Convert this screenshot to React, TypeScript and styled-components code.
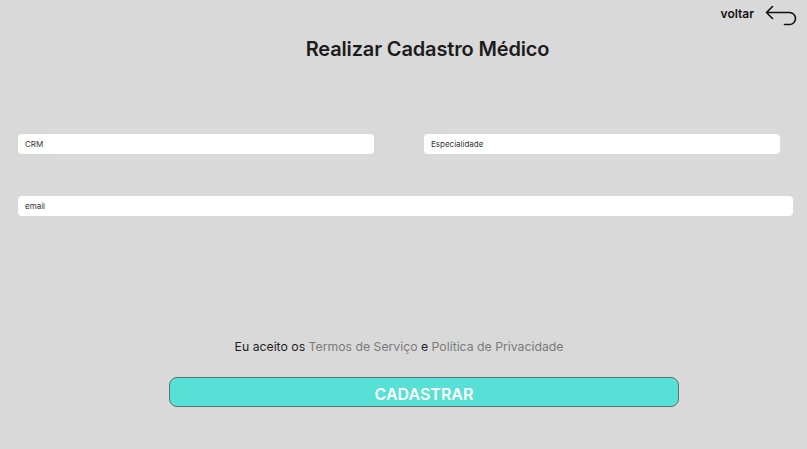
import React from "react";
import styled, { createGlobalStyle } from "styled-components";

const GlobalStyle = createGlobalStyle`
  html, body { margin: 0; padding: 0; background: #d9d9d9; }
  body { font-family: Inter, "Noto Sans", "Liberation Sans", sans-serif; }
  * { box-sizing: border-box; }
`;

const Page = styled.div`
  width: 807px;
  height: 449px;
  background: #d9d9d9;
  display: flex;
  flex-direction: column;
  overflow: hidden;
`;

const TopBar = styled.div`
  display: flex;
  justify-content: flex-end;
  align-items: center;
  gap: 11px;
  padding: 4px 9px 0 0;
  height: 26px;
`;

const BackLabel = styled.span`
  font-size: 12px;
  font-weight: 600;
  color: #111;
  margin-top: -4px;
`;

const BackIcon = styled.svg`
  width: 33px;
  height: 22px;
  display: block;
`;

const Title = styled.h1`
  margin: 11px 0 0;
  padding-left: 48px;
  text-align: center;
  font-size: 20px;
  line-height: 24px;
  font-weight: 600;
  color: #1c1c1c;
  letter-spacing: -0.15px;
`;

const Form = styled.form`
  display: flex;
  flex-direction: column;
  padding: 0 0 0 18px;
  margin-top: 73px;
`;

const Row = styled.div`
  display: grid;
  grid-template-columns: 356px 356px;
  column-gap: 50px;
`;

const Input = styled.input<{ $full?: boolean }>`
  display: block;
  height: 20px;
  width: ${(p) => (p.$full ? "775px" : "100%")};
  border: none;
  border-radius: 4px;
  background: #ffffff;
  padding: 0 7px;
  font-family: Inter, "Noto Sans", "Liberation Sans", sans-serif;
  font-size: 8px;
  color: #222;
  outline: none;
  &::placeholder { color: #333; }
`;

const EmailRow = styled.div`
  margin-top: 42px;
`;

const Agree = styled.p`
  margin: 123px 0 0;
  padding-right: 9px;
  text-align: center;
  font-size: 12.25px;
  line-height: 16px;
  color: #1f1f1f;
`;

const Link = styled.span`
  color: #7a7a7a;
`;

const Submit = styled.button`
  margin: 22px 0 0 169px;
  width: 510px;
  height: 30px;
  border: 1px solid #5f6f6d;
  border-radius: 8px;
  background: #57e0d6;
  color: #ffffff;
  font-family: Inter, "Noto Sans", "Liberation Sans", sans-serif;
  font-size: 16px;
  font-weight: 600;
  padding: 4px 0 0;
  cursor: pointer;
`;

export default function App() {
  return (
    <>
      <GlobalStyle />
      <Page>
        <TopBar>
          <BackLabel>voltar</BackLabel>
          <BackIcon viewBox="0 0 33 22" fill="none" stroke="#111" strokeWidth="1.6" strokeLinecap="round" strokeLinejoin="round">
            <path d="M1.5 8.5 L7.5 2.5 M1.5 8.5 L7.5 14.5 M1.5 8.5 H24.5 A6 6 0 0 1 24.5 20.5 H19.5" />
          </BackIcon>
        </TopBar>
        <Title>Realizar Cadastro Médico</Title>
        <Form onSubmit={(e) => e.preventDefault()}>
          <Row>
            <Input placeholder="CRM" />
            <Input placeholder="Especialidade" />
          </Row>
          <EmailRow>
            <Input $full placeholder="email" />
          </EmailRow>
        </Form>
        <Agree>
          Eu aceito os <Link>Termos de Serviço</Link> e <Link>Política de Privacidade</Link>
        </Agree>
        <Submit type="submit">CADASTRAR</Submit>
      </Page>
    </>
  );
}
